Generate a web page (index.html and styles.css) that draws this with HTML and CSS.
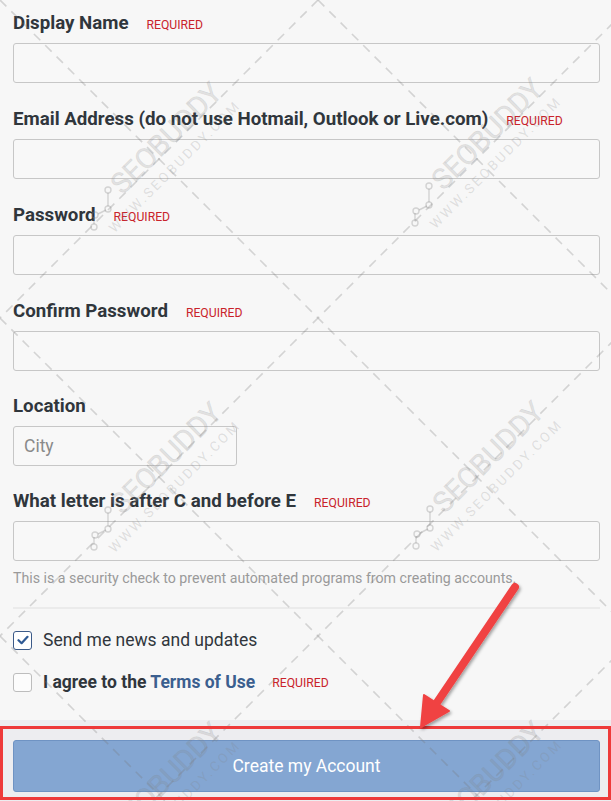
FILE: index.html
```html
<!DOCTYPE html>
<html lang="en">
<head>
<meta charset="utf-8">
<title>Create Account</title>
<link rel="stylesheet" href="styles.css">
</head>
<body>
<div class="page">
  <form class="signup">
    <div class="fields">
      <div class="field">
        <div class="label-row"><label class="label">Display Name</label><span class="req">REQUIRED</span></div>
        <input class="input" type="text">
      </div>
      <div class="field">
        <div class="label-row"><label class="label">Email Address (do not use Hotmail, Outlook or Live.com)</label><span class="req">REQUIRED</span></div>
        <input class="input" type="text">
      </div>
      <div class="field">
        <div class="label-row"><label class="label">Password</label><span class="req">REQUIRED</span></div>
        <input class="input" type="password">
      </div>
      <div class="field field-tight">
        <div class="label-row"><label class="label">Confirm Password</label><span class="req">REQUIRED</span></div>
        <input class="input" type="password">
      </div>
      <div class="field field-tight">
        <div class="label-row"><label class="label">Location</label></div>
        <input class="input input-short" type="text" placeholder="City">
      </div>
      <div class="field field-last">
        <div class="label-row"><label class="label">What letter is after C and before E</label><span class="req">REQUIRED</span></div>
        <input class="input" type="text">
        <p class="help">This is a security check to prevent automated programs from creating accounts.</p>
      </div>
      <div class="divider"></div>
      <div class="checks">
        <div class="check-row">
          <span class="box box-checked">
            <svg width="12" height="10" viewBox="0 0 12 10"><path d="M1.5 5.2 L4.6 8.2 L10.5 1.8" fill="none" stroke="#2f5a94" stroke-width="2.2" stroke-linecap="round" stroke-linejoin="round"/></svg>
          </span>
          <span class="check-text">Send me news and updates</span>
        </div>
        <div class="check-row">
          <span class="box"></span>
          <span class="check-text bold">I agree to the <a class="link">Terms of Use</a></span>
          <span class="req req-check">REQUIRED</span>
        </div>
      </div>
    </div>
    <div class="footer">
      <button type="button" class="btn">Create my Account</button>
    </div>
  </form>

  <svg class="overlay" width="611" height="801" viewBox="0 0 611 801">
    <defs>
      <filter id="sh" x="-20%" y="-20%" width="140%" height="140%">
        <feDropShadow dx="1.5" dy="2" stdDeviation="1.6" flood-color="#000" flood-opacity="0.35"/>
      </filter>
      <g id="wm">
        <text x="0" y="10" text-anchor="middle" class="wm-big" transform="rotate(-45)">SEOBUDDY</text>
        <text x="-14" y="31" text-anchor="middle" class="wm-small" transform="rotate(-45)">WWW.SEOBUDDY.COM</text>
        <g class="wm-icon">
          <line x1="-58" y1="55" x2="-58" y2="68"/>
          <line x1="-60" y1="72" x2="-68" y2="76"/>
          <line x1="-72" y1="79" x2="-72" y2="86"/>
          <circle cx="-58" cy="52" r="3"/>
          <circle cx="-58" cy="71" r="3"/>
          <circle cx="-71" cy="77" r="3"/>
          <circle cx="-72" cy="89" r="3"/>
        </g>
      </g>
    </defs>
    <g class="wm-lines">
      <line x1="0" y1="0" x2="801" y2="801"/>
      <line x1="0" y1="318" x2="483" y2="801"/>
      <line x1="0" y1="636" x2="165" y2="801"/>
      <line x1="318" y1="0" x2="1119" y2="801"/>
      <line x1="636" y1="0" x2="1437" y2="801"/>
      <line x1="318" y1="0" x2="0" y2="318"/>
      <line x1="636" y1="0" x2="0" y2="636"/>
      <line x1="954" y1="0" x2="153" y2="801"/>
      <line x1="1272" y1="0" x2="471" y2="801"/>
    </g>
    <use href="#wm" x="166" y="138"/>
    <use href="#wm" x="487" y="134"/>
    <use href="#wm" x="166" y="458"/>
    <use href="#wm" x="488" y="457"/>
    <use href="#wm" x="166" y="778"/>
    <use href="#wm" x="488" y="777"/>

    <rect x="1.5" y="727.5" width="608" height="71" fill="none" stroke="#ee3a3a" stroke-width="3"/>
    <g filter="url(#sh)">
      <line x1="515" y1="587" x2="436" y2="704" stroke="#f04343" stroke-width="8" stroke-linecap="round"/>
      <polygon points="421,727 424,695 449,711" fill="#f04343" stroke="#f04343" stroke-width="2" stroke-linejoin="round"/>
    </g>
  </svg>
</div>
</body>
</html>
```

FILE: styles.css
```css
* { box-sizing: border-box; }

html, body {
  margin: 0;
  padding: 0;
  background: #f7f7f7;
}

body {
  font-family: Roboto, "Liberation Sans", Arial, sans-serif;
  color: #30363c;
  width: 611px;
  height: 801px;
  overflow: hidden;
}

.page {
  position: relative;
  width: 611px;
  height: 801px;
}

.fields {
  padding: 13px 11px 0 13px;
}

.field {
  margin-bottom: 26px;
}

.field-tight {
  margin-bottom: 25px;
}

.field-last {
  margin-bottom: 0;
}

.label-row {
  display: flex;
  align-items: baseline;
  gap: 18px;
  height: 20px;
  margin-bottom: 10px;
}

.label {
  font-size: 18.7px;
  font-weight: 700;
  line-height: 20px;
  color: #30363c;
}

.req {
  font-size: 12.2px;
  line-height: 14px;
  color: #c9232b;
}

.input {
  display: block;
  width: 100%;
  height: 40px;
  margin: 0;
  border: 1px solid #c7c7c7;
  border-radius: 3px;
  background: #f8f8f8;
  font-family: Roboto, "Liberation Sans", Arial, sans-serif;
  font-size: 17.5px;
  padding: 0 10px;
  color: #333;
}

.input::placeholder {
  color: #8a8a8a;
}

.input-short {
  width: 224px;
}

.help {
  margin: 7px 0 0;
  font-size: 14.2px;
  line-height: 20px;
  color: #9a9a9a;
}

.divider {
  height: 2px;
  background: #ebebeb;
  margin-top: 19px;
}

.checks {
  padding-top: 21px;
  display: flex;
  flex-direction: column;
  gap: 22px;
}

.check-row {
  display: flex;
  align-items: center;
  height: 20px;
}

.box {
  width: 19px;
  height: 19px;
  border: 1.5px solid #bdbdbd;
  border-radius: 3px;
  background: #fcfcfc;
  margin-right: 11px;
  display: flex;
  align-items: center;
  justify-content: center;
  flex: none;
}

.box-checked {
  border-color: #3b5a88;
  background: #fff;
}

.check-text {
  font-size: 17.5px;
  line-height: 20px;
  color: #30363c;
}

.bold {
  font-weight: 700;
}

.link {
  color: #3b5f8f;
}

.req-check {
  margin-left: 17px;
  margin-top: 2px;
}

.footer {
  margin-top: 28px;
  background: #ededf0;
  padding: 20px 11px 20px 13px;
}

.btn {
  display: block;
  width: 100%;
  height: 52px;
  border: 1px solid #6f93c3;
  border-radius: 3px;
  background: #84a6d2;
  color: #fff;
  font-family: Roboto, "Liberation Sans", Arial, sans-serif;
  font-size: 17.5px;
}

.overlay {
  position: absolute;
  left: 0;
  top: 0;
  pointer-events: none;
}

.wm-lines line {
  stroke: rgba(120, 120, 120, 0.28);
  stroke-width: 1.6;
  stroke-dasharray: 9 7;
}

.wm-big {
  font-family: Roboto, "Liberation Sans", sans-serif;
  font-size: 28.5px;
  fill: rgba(130, 130, 130, 0.2);
  stroke: rgba(130, 130, 130, 0.12);
  stroke-width: 0.8;
}

.wm-small {
  font-family: Roboto, "Liberation Sans", sans-serif;
  font-size: 13.5px;
  letter-spacing: 2.6px;
  fill: rgba(130, 130, 130, 0.22);
}

.wm-icon line,
.wm-icon circle {
  stroke: rgba(130, 130, 130, 0.3);
  stroke-width: 1.4;
  fill: none;
}
```
